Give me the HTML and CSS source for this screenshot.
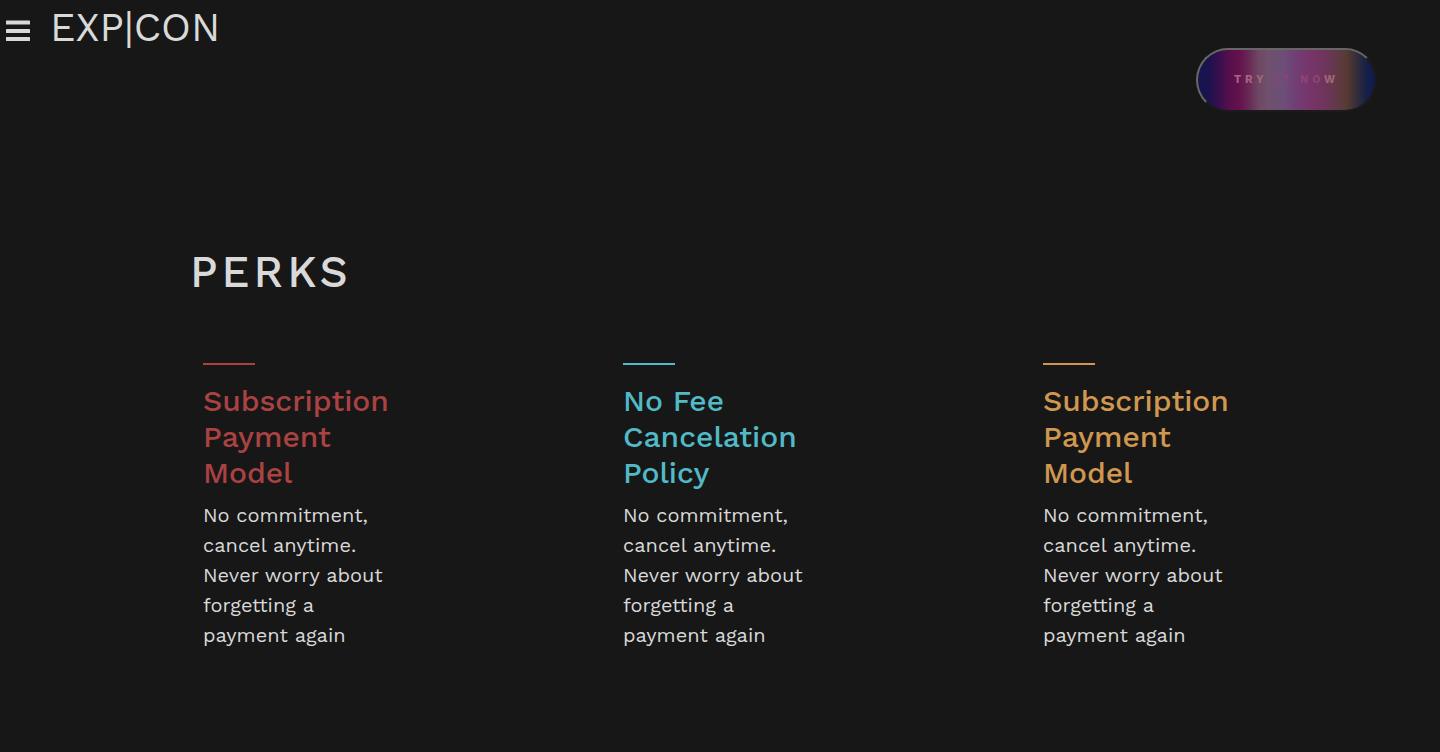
FILE: index.html
```html
<!DOCTYPE html>
<html lang="en">
<head>
<meta charset="utf-8">
<meta name="viewport" content="width=device-width, initial-scale=1">
<title>EXP|CON</title>
<link rel="stylesheet" href="styles.css">
</head>
<body>
<header class="header">
  <div class="brand">
    <button class="menu" type="button" aria-label="Open menu">
      <svg width="24" height="22" viewBox="0 0 24 22" fill="currentColor" aria-hidden="true">
        <rect y="0.5" width="24" height="4" rx="0.6"/>
        <rect y="9" width="24" height="4" rx="0.6"/>
        <rect y="17" width="24" height="4" rx="0.6"/>
      </svg>
    </button>
    <a class="logo" href="#">EXP|CON</a>
  </div>
  <button class="cta" type="button">TR<span class="cta-soft">Y</span> <span class="cta-faint">IT NO</span><span class="cta-soft">W</span></button>
</header>
<main class="perks">
  <h1 class="perks-title">PERKS</h1>
  <div class="perks-list">
    <section class="perk perk-red">
      <h2 class="perk-title">Subscription Payment Model</h2>
      <p class="perk-text">No commitment, cancel anytime. Never worry about forgetting a payment again</p>
    </section>
    <section class="perk perk-teal">
      <h2 class="perk-title">No Fee Cancelation Policy</h2>
      <p class="perk-text">No commitment, cancel anytime. Never worry about forgetting a payment again</p>
    </section>
    <section class="perk perk-gold">
      <h2 class="perk-title">Subscription Payment Model</h2>
      <p class="perk-text">No commitment, cancel anytime. Never worry about forgetting a payment again</p>
    </section>
  </div>
</main>
</body>
</html>
```
FILE: styles.css
```css
* {
  box-sizing: border-box;
}

body {
  margin: 0;
  background: #171717;
  color: #d9d9d9;
  font-family: "Work Sans", Inter, sans-serif;
}

.header {
  display: flex;
  justify-content: space-between;
  align-items: flex-start;
  padding-right: 63px;
}

.brand {
  display: flex;
  align-items: center;
  gap: 20px;
  padding: 4px 0 0 6px;
}

.menu {
  display: flex;
  margin-top: 6px;
  padding: 0;
  border: 0;
  background: none;
  color: inherit;
  cursor: pointer;
}

.logo {
  color: inherit;
  font-size: 40px;
  font-weight: 400;
  line-height: 48px;
  text-decoration: none;
}

.cta {
  width: 181px;
  height: 64px;
  margin-top: 48px;
  padding: 0 0 2px;
  border: 2px solid;
  border-color: #676767 #1b1b1b #1b1b1b #676767;
  border-radius: 32px;
  background:
    linear-gradient(90deg, #141552 0%, #1c124f 6%, #380f4d 12%, #580f4c 18%, #62124b 23%, #682a56 29%, #6e4664 34%, #70506c 39%, #6c4f78 48%, #713f75 55%, #773469 64%, #6c355a 73%, #603a44 79%, #583a33 84%, #332c3b 90%, #182047 95%, #101b50 100%) padding-box;
  color: #ad6286;
  font-family: inherit;
  font-size: 11px;
  font-weight: 700;
  letter-spacing: 4px;
  cursor: pointer;
}

.cta-soft {
  color: #a06973;
}

.cta-faint {
  color: #8e4373;
}

.perks {
  padding: 134px 12.5% 98px;
}

.perks-title {
  margin: 0 0 65px;
  padding-left: 10px;
  font-size: 44px;
  font-weight: 500;
  line-height: 52px;
  letter-spacing: 4px;
}

.perks-list {
  display: flex;
  justify-content: space-between;
}

.perk {
  width: 240px;
  padding: 0 23px;
}

.perk::before {
  content: "";
  display: block;
  width: 52px;
  height: 2px;
  margin-bottom: 18px;
  background: currentColor;
}

.perk-red {
  color: #aa4242;
}

.perk-teal {
  color: #50bac6;
}

.perk-gold {
  color: #d09750;
}

.perk-title {
  margin: 0 0 9px;
  font-size: 30px;
  font-weight: 500;
  line-height: 36px;
}

.perk-text {
  margin: 0;
  color: #d9d9d9;
  font-size: 20px;
  line-height: 30px;
}
```
